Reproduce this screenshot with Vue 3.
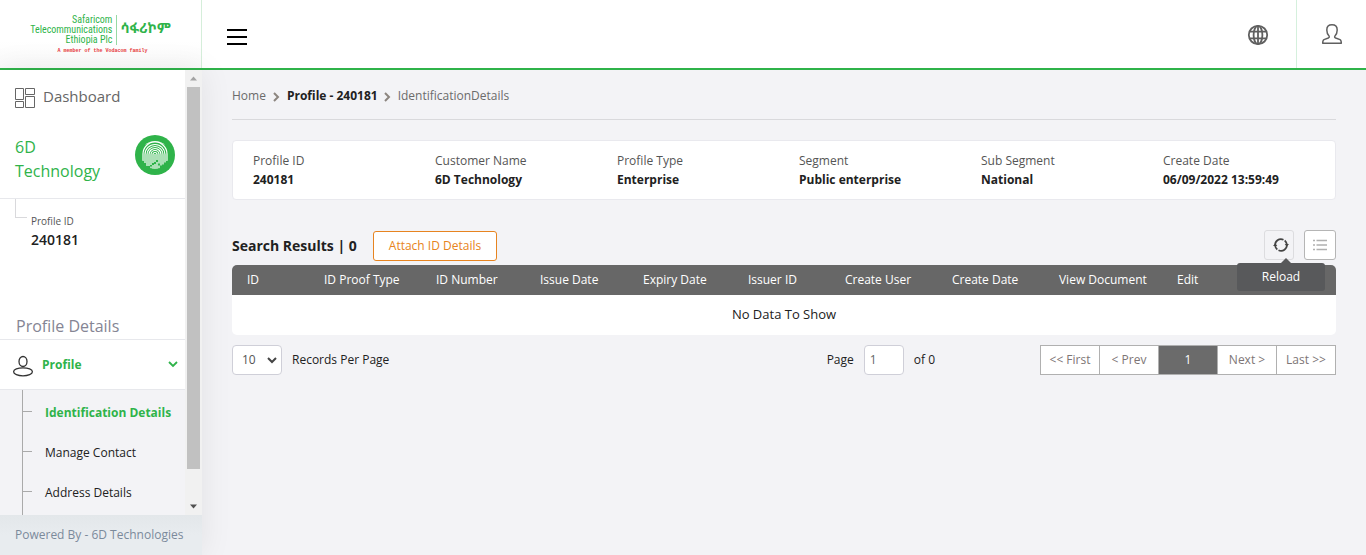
<script setup>
import { ref } from 'vue'

const details = [
  { label: 'Profile ID', value: '240181' },
  { label: 'Customer Name', value: '6D Technology' },
  { label: 'Profile Type', value: 'Enterprise' },
  { label: 'Segment', value: 'Public enterprise' },
  { label: 'Sub Segment', value: 'National' },
  { label: 'Create Date', value: '06/09/2022 13:59:49' },
]

const columns = [
  { title: 'ID', weight: 77 },
  { title: 'ID Proof Type', weight: 112 },
  { title: 'ID Number', weight: 104 },
  { title: 'Issue Date', weight: 103 },
  { title: 'Expiry Date', weight: 105 },
  { title: 'Issuer ID', weight: 97 },
  { title: 'Create User', weight: 107 },
  { title: 'Create Date', weight: 107 },
  { title: 'View Document', weight: 118 },
  { title: 'Edit', weight: 174 },
]
const totalWeight = columns.reduce((sum, c) => sum + c.weight, 0)

const submenu = ['Identification Details', 'Manage Contact', 'Address Details']
const pages = ['<< First', '< Prev', '1', 'Next >', 'Last >>']
const pageSize = ref('10')
const page = ref('1')
</script>

<template>
  <div class="app">
    <header class="topbar">
      <a href="#" class="logo" aria-label="Safaricom Telecommunications Ethiopia Plc">
        <span class="logo-row">
          <span class="logo-name">Safaricom<br>Telecommunications<br>Ethiopia Plc</span>
          <span class="logo-local" lang="am">ሳፋሪኮም</span>
        </span>
        <span class="logo-tag">A member of the Vodacom family</span>
      </a>
      <button class="burger" type="button" aria-label="Toggle menu"><i></i><i></i><i></i></button>
      <button class="top-icon globe" type="button" aria-label="Language">
        <svg width="22" height="22" viewBox="0 0 22 22" fill="none" stroke="#606060" stroke-width="1.8">
          <circle cx="11" cy="11" r="9.2" />
          <ellipse cx="11" cy="11" rx="4.4" ry="9.2" />
          <path d="M11 2v18M3 7.6h16M3 14.4h16" />
        </svg>
      </button>
      <button class="top-icon user" type="button" aria-label="Account">
        <svg width="22" height="22" viewBox="0 0 22 22" fill="none" stroke="#606060" stroke-width="1.5" stroke-linejoin="round">
          <path d="M11 1.7c-3.300 0-5.200 2-5.200 5.200 0 2.600.9 4.900 2.400 6.300.4.900 0 1.400-.9 1.800l-4.300 1.600c-1 .4-1.300 1-1.300 3.700h18.600c0-2.700-.3-3.300-1.300-3.700l-4.300-1.600c-.9-.4-1.300-.9-.9-1.800 1.500-1.400 2.400-3.700 2.400-6.300 0-3.200-1.900-5.200-5.200-5.200z" />
        </svg>
      </button>
    </header>

    <div class="body">
      <aside class="sidebar">
        <div class="side-scroll">
          <nav class="side-content" aria-label="Main">
            <a href="#" class="dashboard">
              <svg width="20" height="20" viewBox="0 0 20 20" fill="none" stroke="#666" stroke-width="1">
                <path d="M.5.5h8v11h-8zM10.500.5h9v6h-9zM.5 13.500h8v6h-8zM10.500 8.500h9v11h-9z" />
              </svg>
              <span>Dashboard</span>
            </a>
            <div class="customer">
              <a href="#" class="customer-name">6D Technology</a>
              <svg class="finger" width="40" height="40" viewBox="0 0 40 40">
                <defs><clipPath id="print"><circle cx="20" cy="20" r="14" /></clipPath></defs>
                <circle cx="20" cy="20" r="20" fill="#2fb34a" />
                <g clip-path="url(#print)" fill="none" stroke="#fff" stroke-width="1.200">
                  <path d="M20 19v8M18 28v-8.500a2 2 0 0 1 4 0v5.500M16 30v-10.500a4 4 0 0 1 8 0v9M14 31v-11.500a6 6 0 0 1 12 0v11M12 31v-11.500a8 8 0 0 1 16 0v10M10 28v-8.500a10 10 0 0 1 20 0v8M8 26v-7a12 12 0 0 1 24 0v7M9.500 9.500c6.500-4.500 14.500-4.500 21 0M13 7.500c5-2 9-2 14 0M20 29v5M22 27v7M18 30v4M24 30.500v3M16 31.500v2" />
                </g>
              </svg>
            </div>
            <div class="profile-id">
              <span>Profile ID</span>
              <strong>240181</strong>
            </div>
            <h2>Profile Details</h2>
            <button class="group" type="button" aria-expanded="true">
              <svg class="person" width="22" height="22" viewBox="0 0 22 22" fill="none" stroke="#333" stroke-width="1.300">
                <ellipse cx="11" cy="6.500" rx="4" ry="5" />
                <ellipse cx="11" cy="16.800" rx="9.400" ry="4" />
              </svg>
              <span>Profile</span>
              <svg class="chev" width="10" height="7" viewBox="0 0 10 7" fill="none" stroke="#2fb34a" stroke-width="1.800">
                <path d="M1 1l4 4 4-4" />
              </svg>
            </button>
            <ul class="submenu">
              <li v-for="(item, i) in submenu" :key="item">
                <a href="#" :class="{ active: i === 0 }">{{ item }}</a>
              </li>
            </ul>
          </nav>
          <div class="scrollbar" aria-hidden="true">
            <svg width="17" height="17" viewBox="0 0 17 17"><path d="M5 10.500l3.500-4 3.500 4z" fill="#a3a3a3" /></svg>
            <div class="track"><div class="thumb"></div></div>
            <svg width="17" height="17" viewBox="0 0 17 17"><path d="M5 6.500l3.500 4 3.500-4z" fill="#505050" /></svg>
          </div>
        </div>
        <footer>Powered By - 6D Technologies</footer>
      </aside>

      <main>
        <nav class="crumbs" aria-label="Breadcrumb">
          <a href="#">Home</a>
          <svg width="7" height="10" viewBox="0 0 7 10" fill="none" stroke="#8c857f" stroke-width="2"><path d="M1 1l4 4-4 4" /></svg>
          <a href="#" class="strong">Profile - 240181</a>
          <svg width="7" height="10" viewBox="0 0 7 10" fill="none" stroke="#8c857f" stroke-width="2"><path d="M1 1l4 4-4 4" /></svg>
          <span>IdentificationDetails</span>
        </nav>

        <dl class="card">
          <div v-for="d in details" :key="d.label">
            <dt>{{ d.label }}</dt>
            <dd>{{ d.value }}</dd>
          </div>
        </dl>

        <div class="toolbar">
          <h1>Search Results | 0</h1>
          <button class="attach" type="button">Attach ID Details</button>
          <div class="reload-wrap">
            <button class="tool reload" type="button" aria-label="Reload" aria-describedby="reload-tip">
              <svg width="16" height="16" viewBox="0 0 16 16" fill="none" stroke="#444" stroke-width="1.700">
                <path d="M2.200 8.800a5.800 5.800 0 0 1 8.300-6.100M11.700 3.500a5.800 5.800 0 0 1 2.100 3.700M13.800 7.200a5.800 5.800 0 0 1-8.300 6.100M4.300 12.500a5.800 5.800 0 0 1-2.100-3.700" />
                <path d="M11.700 7h4.300l-2.200 2.400zM0 9h4.300l-2.100-2.400z" fill="#444" stroke="none" />
              </svg>
            </button>
            <div id="reload-tip" class="tip" role="tooltip">Reload</div>
          </div>
          <button class="tool list" type="button" aria-label="Columns">
            <svg width="14" height="12" viewBox="0 0 14 12" fill="none" stroke="#b0b0b0" stroke-width="1.400">
              <path d="M0 1.500h2M3.500 1.500h10.500M0 6h2M3.500 6h10.500M0 10.500h2M3.500 10.500h10.500" />
            </svg>
          </button>
        </div>

        <table>
          <colgroup>
            <col v-for="c in columns" :key="c.title" :style="{ width: (c.weight / totalWeight) * 100 + '%' }">
          </colgroup>
          <thead>
            <tr><th v-for="c in columns" :key="c.title" scope="col">{{ c.title }}</th></tr>
          </thead>
          <tbody>
            <tr><td :colspan="columns.length">No Data To Show</td></tr>
          </tbody>
        </table>

        <div class="pager">
          <div class="size">
            <span class="select-box">
              <select id="size" v-model="pageSize">
                <option>10</option>
                <option>20</option>
                <option>50</option>
              </select>
              <svg width="10" height="7" viewBox="0 0 10 7" fill="none" stroke="#444" stroke-width="2"><path d="M1 1l4 4 4-4" /></svg>
            </span>
            <label for="size">Records Per Page</label>
          </div>
          <div class="goto">
            <label for="page">Page</label>
            <input id="page" v-model="page" type="text">
            <span>of 0</span>
          </div>
          <div class="pages">
            <button v-for="p in pages" :key="p" type="button" :class="{ current: p === '1' }">{{ p }}</button>
          </div>
        </div>
      </main>
    </div>
  </div>
</template>

<style>
body { margin: 0; background: #f3f3f6; }
</style>

<style scoped>
.app {
  display: flex;
  flex-direction: column;
  height: 100vh;
  overflow: hidden;
  font: 12px/20px "Open Sans", sans-serif;
  color: #212121;
}
.app * { box-sizing: border-box; }
a { color: inherit; text-decoration: none; }
button, input, select { font: inherit; color: inherit; margin: 0; padding: 0; border: 0; background: none; }
svg { display: block; flex: none; }

.topbar {
  display: flex;
  flex: none;
  height: 70px;
  background: #fff;
  border-bottom: 2px solid #2fb34a;
}
.logo {
  display: flex;
  flex-direction: column;
  align-items: center;
  flex: none;
  width: 202px;
  padding-top: 15px;
  border-right: 1px solid #d5eeda;
  background: linear-gradient(#fff 60%, #fafafa);
}
.logo-row { display: flex; align-items: center; color: #2fb34a; }
.logo-name {
  padding-right: 4px;
  border-right: 1px solid #97d9a4;
  font: 10px/10px "Liberation Sans Narrow", "Roboto Condensed", Roboto, sans-serif;
  text-align: right;
}
.logo-local { padding: 0 0 4px 3px; font: bold 14px/16px "Noto Sans Ethiopic", "Noto Sans", sans-serif; }
.logo-tag { margin: 2px 0 0 4px; font: bold 5px/8px "Liberation Mono", monospace; color: #e8383d; }
.burger {
  display: flex;
  flex-direction: column;
  gap: 5px;
  margin: 29px auto 0 25px;
  align-self: flex-start;
}
.burger i { width: 20px; height: 2px; background: #000; }
.top-icon { display: flex; align-items: center; justify-content: center; }
.globe { width: 78px; padding: 2px 0 0 2px; }
.user { width: 70px; border-left: 1px solid #d5f0dd; }

.body { display: flex; flex: 1; min-height: 0; }
.sidebar {
  display: flex;
  flex-direction: column;
  flex: none;
  width: 202px;
  background: #fff;
  box-shadow: 0 0 30px rgba(0, 0, 0, .08);
}
.side-scroll { display: flex; flex: 1; min-height: 0; }
.side-content { flex: 1; min-width: 0; overflow: hidden; background: #f3f3f6; }
.dashboard {
  display: flex;
  align-items: center;
  gap: 8px;
  height: 56px;
  padding-left: 15px;
  background: #fff;
  font-size: 15px;
  color: #666;
}
.dashboard span { padding-bottom: 4px; }
.customer {
  display: flex;
  align-items: flex-start;
  justify-content: space-between;
  height: 73px;
  padding: 9px 10px 0 15px;
  border-bottom: 1px solid #e7e8ec;
  background: #fff;
}
.customer-name { width: 100px; font-size: 16px; line-height: 24px; color: #2fb34a; }
.profile-id {
  position: relative;
  display: flex;
  flex-direction: column;
  height: 114px;
  padding: 13px 0 0 31px;
  background: #fff;
}
.profile-id::before {
  content: "";
  position: absolute;
  left: 15px;
  top: 0;
  width: 11px;
  height: 18px;
  border: solid #d9d9dc;
  border-width: 0 0 1px 1px;
}
.profile-id span { font-size: 10px; line-height: 18px; color: #555; }
.profile-id strong { font-size: 14px; font-weight: 600; }
h2 {
  height: 27px;
  margin: 0;
  padding-left: 16px;
  border-bottom: 1px solid #e7e8ec;
  background: #fff;
  font-size: 16px;
  font-weight: 400;
  line-height: 26px;
  color: #858594;
}
.group {
  display: flex;
  align-items: center;
  gap: 8px;
  width: 100%;
  height: 50px;
  padding: 0 7px 0 12px;
  border-bottom: 1px solid #e7e8ec;
  background: #fff;
  font-weight: 700;
  color: #2fb34a;
}
.person { margin-top: 2px; }
.chev { margin-left: auto; }
.submenu {
  margin: 0;
  padding: 3px 0;
  list-style: none;
  background: linear-gradient(90deg, transparent 22px, #aaa 22px, #aaa 23px, transparent 23px) #f3f3f6;
}
.submenu li { display: flex; align-items: center; height: 40px; }
.submenu li::before { content: ""; width: 9px; height: 1px; margin: 0 13px 3px 23px; background: #aaa; }
.active { font-weight: 700; color: #2fb34a; }
.scrollbar {
  display: flex;
  flex-direction: column;
  flex: none;
  width: 17px;
  background: #f1f1f1;
}
.track { flex: 1; min-height: 0; padding: 0 2px; }
.thumb { height: 93%; background: #c1c1c1; }
footer {
  flex: none;
  height: 40px;
  padding-left: 15px;
  background: linear-gradient(#e3e7ea, #e8ecef 20px);
  line-height: 40px;
  color: #7b8a9b;
}

main { flex: 1; min-width: 0; padding: 0 30px; }
.crumbs {
  display: flex;
  align-items: center;
  gap: 7px;
  height: 50px;
  padding-top: 3px;
  border-bottom: 1px solid #d9d9dc;
  color: #6b6b6b;
}
.crumbs svg { margin-top: 2px; }
.strong { margin-right: -1px; font-weight: 700; color: #212121; }
.card {
  display: grid;
  grid-template-columns: repeat(6, 1fr);
  height: 60px;
  margin: 20px 0 30px;
  padding: 10px 5px;
  border: 1px solid #e9e9ee;
  border-radius: 4px;
  background: #fff;
}
.card div { padding-left: 15px; }
dt { line-height: 19px; color: #555; }
dd { margin: 0; line-height: 19px; font-weight: 700; }

.toolbar { display: flex; align-items: flex-start; height: 35px; }
h1 { margin: 0 16px 0 0; font-size: 14px; font-weight: 700; line-height: 32px; }
.attach {
  height: 30px;
  margin-top: 1px;
  padding: 0 15px;
  border: 1px solid #e78420;
  border-radius: 3px;
  background: #fff;
  color: #e78420;
}
.reload-wrap { position: relative; margin: 0 10px 0 auto; }
.tool { display: flex; align-items: center; justify-content: center; height: 30px; border-radius: 3px; }
.reload { width: 30px; padding-left: 4px; border: 1px solid #dcdcdf; }
.list { width: 32px; border: 1px solid #b5b5b5; background: #fff; }
.tip {
  position: absolute;
  z-index: 1;
  top: 33px;
  right: -31px;
  width: 88px;
  border-radius: 3px;
  background: #58595b;
  color: #fff;
  line-height: 28px;
  text-align: center;
}
.tip::before {
  content: "";
  position: absolute;
  left: 44px;
  top: -5px;
  border: solid transparent;
  border-width: 0 5px 5px;
  border-bottom-color: #58595b;
}

table {
  width: 100%;
  table-layout: fixed;
  border-collapse: collapse;
  border-radius: 5px;
  overflow: hidden;
  background: #fff;
}
th { height: 30px; padding: 0 0 0 15px; background: #676767; color: #fff; font-weight: 400; text-align: left; white-space: nowrap; }
td { height: 40px; padding: 0 0 2px; font-size: 13px; text-align: center; }

.pager { display: flex; align-items: center; margin-top: 10px; }
.size, .goto { display: flex; align-items: center; gap: 10px; }
.goto { margin: 0 105px 0 auto; }
.select-box { display: grid; align-items: center; }
.select-box > * { grid-area: 1 / 1; }
.select-box svg { justify-self: end; margin-right: 5px; pointer-events: none; }
select {
  appearance: none;
  width: 50px;
  height: 30px;
  padding-left: 9px;
  border: 1px solid #cfcfd8;
  border-radius: 4px;
  background: #fff;
  color: #555;
}
input {
  width: 40px;
  height: 30px;
  padding: 0 0 1px 5px;
  border: 1px solid #cfcfd8;
  border-radius: 4px;
  background: #fff;
  color: #666;
}
.pages { display: flex; border: 1px solid #b0b0b0; background: #fff; }
.pages button { width: 59px; height: 28px; border-left: 1px solid #b0b0b0; color: #7d7575; }
.pages button:first-child { width: 58px; border-left: 0; }
.pages .current { background: #6b6b6b; color: #fff; }
</style>
